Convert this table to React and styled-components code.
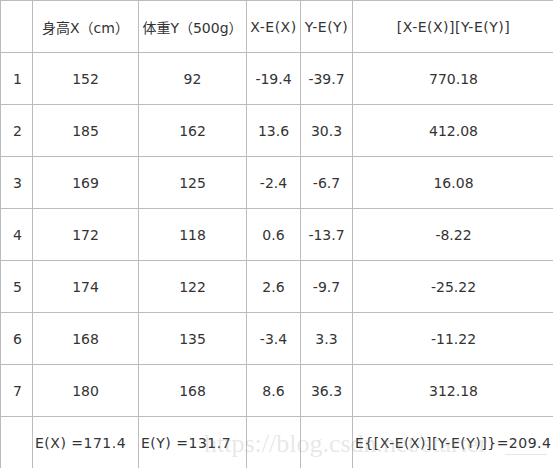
import React from "react";
import styled, { createGlobalStyle } from "styled-components";

const Global = createGlobalStyle`
  html, body { margin: 0; padding: 0; overflow: hidden; background: #fff; }
  body { font-family: "DejaVu Sans", Verdana, "Noto Sans CJK SC", sans-serif; }
`;

const Frame = styled.div`
  position: relative;
  width: 553px;
  height: 468px;
  overflow: hidden;
`;

const Table = styled.table`
  border-collapse: separate;
  border-spacing: 0;
  table-layout: fixed;
  width: 554px;
  border-top: 1px solid #bcbcbc;
  border-left: 1px solid #bcbcbc;
  font-family: "DejaVu Sans", Verdana, "Noto Sans CJK SC", sans-serif;
  font-size: 14px;
  color: #333;
`;

const Row = styled.tr`
  height: 52px;
`;

const Cell = styled.td`
  box-sizing: border-box;
  padding: 0;
  border-right: 1px solid #bcbcbc;
  border-bottom: 1px solid #bcbcbc;
  vertical-align: middle;
  white-space: nowrap;
  overflow: hidden;
  text-align: ${(p) => (p.$left ? "left" : "center")};
  padding-left: ${(p) => (p.$left ? "2px" : "0")};
  letter-spacing: ${(p) => (p.$wide ? "0.5px" : "0")};
`;

const IndexCell = styled(Cell)`
  text-align: left;
  padding-left: 12px;
`;

const Watermark = styled.div`
  position: absolute;
  left: 204px;
  top: 431px;
  font-family: "Liberation Serif", "Times New Roman", serif;
  font-size: 26px;
  line-height: 26px;
  color: rgba(150, 150, 150, 0.24);
  white-space: nowrap;
  pointer-events: none;
  display: flex;
  align-items: baseline;
`;

const Underscores = styled.span`
  display: inline-block;
  width: 42px;
  margin-left: 18px;
  border-bottom: 1px solid rgba(150, 150, 150, 0.22);
  height: 1px;
  transform: translateY(3px);
`;

const widths = [32, 106, 108, 54, 52, 202];

const header = [
  { t: "" },
  { t: "身高X（cm）" },
  { t: "体重Y（500g）" },
  { t: "X-E(X)", wide: true },
  { t: "Y-E(Y)", wide: true },
  { t: "[X-E(X)][Y-E(Y)]", wide: true },
];

const data = [
  ["1", "152", "92", "-19.4", "-39.7", "770.18"],
  ["2", "185", "162", "13.6", "30.3", "412.08"],
  ["3", "169", "125", "-2.4", "-6.7", "16.08"],
  ["4", "172", "118", "0.6", "-13.7", "-8.22"],
  ["5", "174", "122", "2.6", "-9.7", "-25.22"],
  ["6", "168", "135", "-3.4", "3.3", "-11.22"],
  ["7", "180", "168", "8.6", "36.3", "312.18"],
];

export default function App() {
  return (
    <>
      <Global />
      <Frame>
        <Table>
          <colgroup>
            {widths.map((w, i) => (
              <col key={i} style={{ width: w }} />
            ))}
          </colgroup>
          <tbody>
            <Row>
              {header.map((h, i) => (
                <Cell key={i} $wide={h.wide}>
                  {h.t}
                </Cell>
              ))}
            </Row>
            {data.map((r) => (
              <Row key={r[0]}>
                <IndexCell>{r[0]}</IndexCell>
                {r.slice(1).map((v, i) => (
                  <Cell key={i}>{v}</Cell>
                ))}
              </Row>
            ))}
            <Row>
              <Cell />
              <Cell $left $wide>E(X) =171.4</Cell>
              <Cell $left $wide>E(Y) =131.7</Cell>
              <Cell />
              <Cell />
              <Cell $left $wide>E{"{"}[X-E(X)][Y-E(Y)]{"}"}=209.4</Cell>
            </Row>
          </tbody>
        </Table>
        <Watermark>
          https://blog.csdn.net/starter
          <Underscores />
        </Watermark>
      </Frame>
    </>
  );
}
